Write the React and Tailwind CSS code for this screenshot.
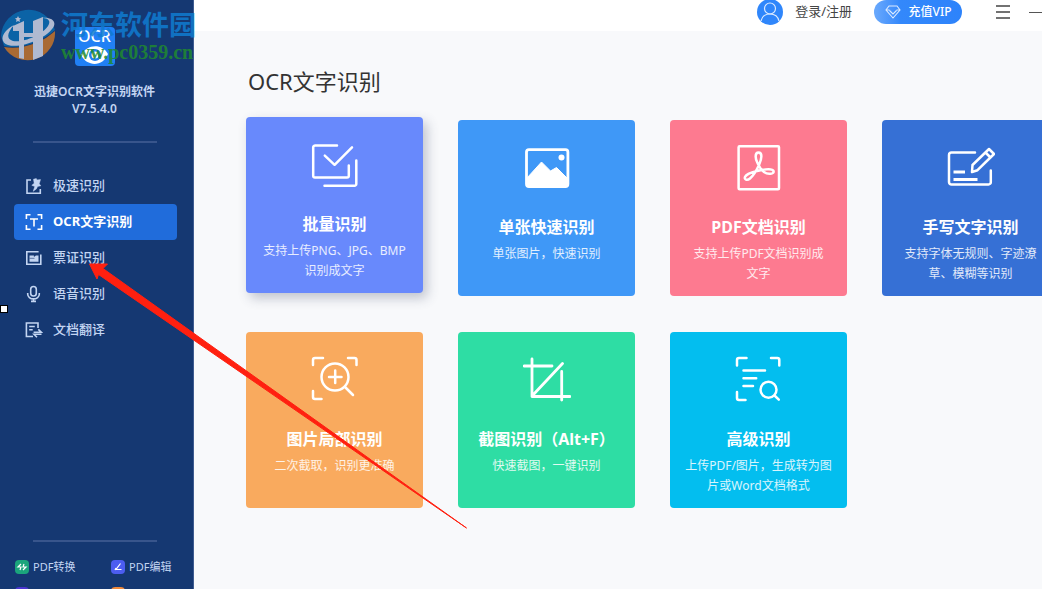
import React, { useState } from 'react';

const MenuIcon = ({ name }) => (
	<svg
		viewBox="0 0 18 18"
		className="w-[18px] h-[18px] shrink-0"
		fill="none"
		stroke="currentColor"
		strokeWidth="1.6"
		aria-hidden="true"
	>
		{name === 'fast' && (
			<>
				<path d="M6 3H2v13.2h13.3V12" />
				<path
					d="M8.5 2.2l2.8-.6L12 3l3.5-.4-1.3 4.2 1.6 2-3.2.6-1.2 2.5-3.2 2.4 1.6-4.8L6.8 8.3l2.4-2z"
					fill="currentColor"
					strokeWidth=".5"
				/>
			</>
		)}
		{name === 'ocr' && (
			<>
				<path d="M5.5 1.8H1.4v4.1M12.5 1.8h4.1v4.1M1.4 12.1v4.1h4.1M16.6 12.1v4.1h-4.1" />
				<path d="M5 6h8M9 6v7.5" />
			</>
		)}
		{name === 'ticket' && (
			<>
				<path d="M13.6 2.7H1.8v12.6h14V5.5" />
				<path
					d="M4.5 6.4h4.4v1.5l2-1.5h2.6v6.4h-9z"
					fill="currentColor"
					stroke="none"
				/>
				<path d="M4.5 9.3h5" stroke="#153872" strokeWidth=".6" />
			</>
		)}
		{name === 'voice' && (
			<>
				<rect x="5.7" y="1.5" width="5.6" height="9.5" rx="2.8" />
				<path d="M2.7 8v1.3a5.8 4.6 0 0 0 11.6 0V8M8.5 14v2.5M6 16.4h5" />
			</>
		)}
		{name === 'translate' && (
			<>
				<path d="M13 7V2H1.4v13.5H8M4.2 5.5h5.6M4.2 8.8h3.5" />
				<path d="M8.6 11.2h7.6L13.3 8.4M16.5 13.3H9l3 3" />
			</>
		)}
	</svg>
);

const CardIcon = ({ name }) => (
	<svg
		viewBox="0 0 48 48"
		className="w-12 h-12"
		fill="none"
		stroke="currentColor"
		strokeWidth="2.5"
		strokeLinecap="round"
		strokeLinejoin="round"
		aria-hidden="true"
	>
		{name === 'batch' && (
			<>
				<path d="M26 4.5H4A1.8 1.8 0 0 0 2.2 6v28.8A1.8 1.8 0 0 0 4 36.6h32a1.8 1.8 0 0 0 1.8-1.8V24.5" />
				<path d="M13.5 44.7h30a1.8 1.8 0 0 0 1.8-1.8V19.5" />
				<path d="M13.8 14.6l9.8 9.2L41 6.3" />
			</>
		)}
		{name === 'image' && (
			<>
				<rect x="3.5" y="5.6" width="41.4" height="37" rx="2.5" strokeWidth="2.8" />
				<path
					d="M4 34l14.5-16 9 9 6-3.5L44 34v8H4z"
					fill="currentColor"
					strokeWidth="1"
				/>
				<circle cx="38.5" cy="13.5" r="3" fill="currentColor" stroke="none" />
			</>
		)}
		{name === 'pdf' && (
			<>
				<rect x="3.6" y="2.2" width="40.4" height="43" rx="1" />
				<path d="M22.5 19c-2.2-4-3-10.500 1-10.500s3.500 6 .5 12.500-6 11-9 13.500-6 1-5-1.500 6-4.500 12-6 15.500-3 16.500 0-5.500 4-9.500 1-4.500-5-6.500-9z" />
			</>
		)}
		{name === 'write' && (
			<>
				<path d="M28 8.6H4.5A2.5 2.5 0 0 0 2 11v27a2.5 2.5 0 0 0 2.5 2.5h37A2.3 2.3 0 0 0 43.8 38V26.5" />
				<path d="M6.5 28H18M6.5 35.5h24" strokeWidth="2.8" strokeLinecap="butt" />
				<path d="M25 28l.5-7L42 5l5 5-16.500 16.200zM38.500 8.500l5 5" />
			</>
		)}
		{name === 'area' && (
			<>
				<path d="M12 2H4a2 2 0 0 0-2 2v5M37 2h6.500a2 2 0 0 1 2 2v5M2 35v6a2 2 0 0 0 2 2h6.500" />
				<circle cx="24" cy="21" r="13.5" />
				<path d="M18 21h12.500M24.200 14.500V27M34 31l8 8" />
			</>
		)}
		{name === 'crop' && (
			<path
				d="M9 3v37.500h38M1 10h28M38.700 15.500V44M9.500 39.500L39.500 7.500"
				strokeWidth="2.8"
			/>
		)}
		{name === 'advanced' && (
			<>
				<path d="M11.500 2H4a2 2 0 0 0-2 2v5.500M36 2h6.300a2 2 0 0 1 2 2v5.500M2 36v6a2 2 0 0 0 2 2h6.500M8.500 14.500H30M8.500 22.300h12.700M8.500 30H18" />
				<circle cx="33.5" cy="33.7" r="8" />
				<path d="M39.500 39.500l4.300 4.200" />
			</>
		)}
	</svg>
);

const menu = [
	{ icon: 'fast', label: '极速识别' },
	{ icon: 'ocr', label: 'OCR文字识别' },
	{ icon: 'ticket', label: '票证识别' },
	{ icon: 'voice', label: '语音识别' },
	{ icon: 'translate', label: '文档翻译' }
];

const cards = [
	{
		icon: 'batch',
		title: '批量识别',
		lines: ['支持上传PNG、JPG、BMP', '识别成文字'],
		style: 'bg-[#6889fc] -translate-y-[3px] shadow-[4px_5px_12px_rgba(60,70,100,0.3)]'
	},
	{
		icon: 'image',
		title: '单张快速识别',
		lines: ['单张图片，快速识别'],
		style: 'bg-[#3f98f7]'
	},
	{
		icon: 'pdf',
		title: 'PDF文档识别',
		lines: ['支持上传PDF文档识别成', '文字'],
		style: 'bg-[#fd7a90]'
	},
	{
		icon: 'write',
		title: '手写文字识别',
		lines: ['支持字体无规则、字迹潦', '草、模糊等识别'],
		style: 'bg-[#3670d5]'
	},
	{
		icon: 'area',
		title: '图片局部识别',
		lines: ['二次截取，识别更准确'],
		style: 'bg-[#f9aa5e]'
	},
	{
		icon: 'crop',
		title: '截图识别（Alt+F）',
		lines: ['快速截图，一键识别'],
		style: 'bg-[#2edda4]'
	},
	{
		icon: 'advanced',
		title: '高级识别',
		lines: ['上传PDF/图片，生成转为图', '片或Word文档格式'],
		style: 'bg-[#03beef]'
	}
];

const Sidebar = () => {
	const [active, setActive] = useState('ocr');
	return (
		<aside className="w-[194px] shrink-0 h-full flex flex-col bg-[#153872] border-r border-[#3f5c90] text-[#c3d5f2]">
			<div className="pt-[27px] pr-1 flex flex-col items-center text-center">
				<div className="w-10 h-[39px] rounded-sm bg-[#2180f5] text-white flex flex-col items-center">
					<span className="text-base leading-[19px] font-medium">OCR</span>
					<svg viewBox="0 0 28 18" className="w-7 h-[18px]" aria-hidden="true">
						<path d="M0 9C6-2 21-3 27 8c-5 13-21 13-27 1z" fill="#fff" />
						<circle cx="14" cy="9" r="6" fill="#2180f5" />
						<circle cx="14" cy="9" r="3.5" fill="#fff" />
					</svg>
				</div>
				<h1 className="mt-[17px] text-xs leading-[17px] font-semibold">
					迅捷OCR文字识别软件
					<br />
					V7.5.4.0
				</h1>
			</div>
			<div className="mt-6 ml-[33px] mr-9 h-0.5 bg-[#38558c]" />
			<nav className="mt-[25px] pl-3.5 pr-4">
				{menu.map(item => (
					<button
						key={item.icon}
						type="button"
						onClick={() => setActive(item.icon)}
						className={
							active === item.icon
								? 'w-full h-9 pl-[11px] flex items-center gap-2.5 rounded-sm text-[13px] font-bold bg-[#206cdb] text-white'
								: 'w-full h-9 pl-[11px] flex items-center gap-2.5 rounded-sm text-[13px] font-medium'
						}
					>
						<MenuIcon name={item.icon} />
						{item.label}
					</button>
				))}
			</nav>
			<div className="mt-auto h-[49px] shrink-0 overflow-hidden">
				<div className="ml-[33px] mr-9 h-0.5 bg-[#38558c]" />
				<div className="pt-4 pl-[15px] grid grid-cols-[96px_1fr] gap-y-[11px] text-[11px] leading-[18px]">
					<a href="#convert" className="flex items-center gap-1">
						<svg viewBox="0 0 14 14" className="w-3.5 h-3.5" aria-hidden="true">
							<rect width="14" height="14" rx="4" fill="#1ba57c" />
							<path
								d="M6 4L3 7h3L5 10M8 10l3-3H8l1-3"
								fill="none"
								stroke="#fff"
								strokeWidth="1.2"
							/>
						</svg>
						PDF转换
					</a>
					<a href="#edit" className="flex items-center gap-1">
						<svg viewBox="0 0 14 14" className="w-3.5 h-3.5" aria-hidden="true">
							<rect width="14" height="14" rx="4" fill="#4c5df0" />
							<path
								d="M9.5 3.5L5 9.5h5.5M4 10l1-2"
								fill="none"
								stroke="#fff"
								strokeWidth="1.2"
							/>
						</svg>
						PDF编辑
					</a>
					<span className="w-3.5 h-3.5 rounded bg-[#4a35d0]" />
					<span className="w-3.5 h-3.5 rounded bg-[#f08a3c]" />
				</div>
			</div>
		</aside>
	);
};

const Header = () => (
	<header className="h-[31px] bg-white">
		<div className="h-6 flex items-center justify-end text-xs text-[#444]">
			<button type="button" className="flex items-center gap-3">
				<svg viewBox="0 0 26 26" className="w-[26px] h-[26px]" aria-hidden="true">
					<circle cx="13" cy="13" r="13" fill="#2f86fb" />
					<g fill="none" stroke="#dbeaff" strokeWidth="1.2">
						<circle cx="13" cy="9.5" r="5.5" />
						<path d="M4 22c1-4.500 4-7 9-7s8 2.500 9 7" />
					</g>
				</svg>
				<span className="text-[13px]">登录/注册</span>
			</button>
			<button
				type="button"
				className="ml-[22px] w-[88px] h-6 rounded-full bg-linear-to-r from-[#6aa9fc] via-[#3388fb] via-30% to-[#2d83fb] text-white flex items-center justify-center gap-2 font-medium"
			>
				<svg
					viewBox="0 0 16 14"
					className="w-4 h-3.5"
					fill="none"
					stroke="#dbeaff"
					strokeWidth="1.1"
					aria-hidden="true"
				>
					<path d="M4 1h8l3 4-7 8-7-8zM4.500 5.500L8 9l3.500-3.500M1 5h3.500M11.500 5H15" />
				</svg>
				充值VIP
			</button>
			<button type="button" aria-label="菜单" className="ml-[33px]">
				<svg viewBox="0 0 16 14" className="w-4 h-3.5" aria-hidden="true">
					<path d="M1 1h14M1 7h14M1 13h14" stroke="#444" strokeWidth="1.3" />
				</svg>
			</button>
			<button type="button" aria-label="最小化" className="ml-[17px]">
				<svg viewBox="0 0 14 14" className="w-3.5 h-3.5" aria-hidden="true">
					<path d="M1 7.5h13" stroke="#555" />
				</svg>
			</button>
		</div>
	</header>
);

const Watermark = () => (
	<div className="absolute left-0 top-1.5 flex items-start gap-[5px] opacity-85 pointer-events-none">
		<svg viewBox="0 0 56 56" className="w-14 h-14" aria-hidden="true">
			<path d="M1 30a27.500 27.500 0 0 1 54-6C42 36 20 44 4 40z" fill="#0a6bb0" />
			<path d="M4 41c18 3 38-4 51-16a27.500 27.500 0 0 1-51 16z" fill="#c3732a" />
			<path d="M13 20l11-5v38l-5-1V25h-6zM33 15l10-4v39l-10 4V31h-9v-4h9z" fill="#ccd1e2" />
			<path
				d="M14 19C1 26-1 36 8 39c13 4 40-7 46-19 2-6-4-9-13-8 8 0 10 3 7 8-6 9-25 17-35 15-7-2-6-8 1-16z"
				fill="#ccd1e2"
			/>
			<path d="M18 10l1 2 2 .3-1.500 1.500.4 2.200-1.900-1-1.900 1 .4-2.200L15 12.300l2-.3z" fill="#ccd1e2" />
		</svg>
		<div className="pt-1 whitespace-nowrap">
			<div className="text-[27px] leading-[30px] font-bold text-[#107bd0]">河东软件园</div>
			<div className="font-['Liberation_Serif',serif] text-xl leading-6 font-bold text-[#208a30]">
				www.pc0359.cn
			</div>
		</div>
	</div>
);

const App = () => {
	return (
		<div className="relative h-screen flex overflow-hidden bg-[#f8f9fb] font-['Noto_Sans','Noto_Sans_CJK_SC',sans-serif]">
			<Sidebar />
			<div className="flex-1 min-w-0">
				<Header />
				<main className="pt-[34px] pl-[52px]">
					<h2 className="pl-0.5 text-[22px] leading-8 text-[#333]">OCR文字识别</h2>
					<div className="mt-[23px] grid grid-cols-[repeat(4,177px)] gap-x-[35px] gap-y-9">
						{cards.map(card => (
							<button
								key={card.icon}
								type="button"
								className={`h-44 pt-6 flex flex-col items-center rounded text-white ${card.style}`}
							>
								<CardIcon name={card.icon} />
								<span className="mt-6 text-base leading-[22px] font-bold whitespace-nowrap">
									{card.title}
								</span>
								<span className="mt-1.5 text-xs leading-5 text-white/85 whitespace-nowrap">
									{card.lines.map(line => (
										<span key={line} className="block">
											{line}
										</span>
									))}
								</span>
							</button>
						))}
					</div>
				</main>
			</div>
			<Watermark />
			{/* selection handle */}
			<div className="absolute left-0 top-[305px] w-2 h-2 bg-white border border-black" />
			{/* arrow to the ticket entry */}
			<svg
				viewBox="0 0 470 532"
				className="absolute left-0 top-0 w-[470px] h-[532px] pointer-events-none"
				aria-hidden="true"
			>
				<path
					d="M89.500 264h18l-4.500 4.500L466.500 528 98.500 274.500l-1.500 4.500z"
					fill="#ff2010"
					stroke="#ff2010"
				/>
			</svg>
		</div>
	);
};

export default App;
